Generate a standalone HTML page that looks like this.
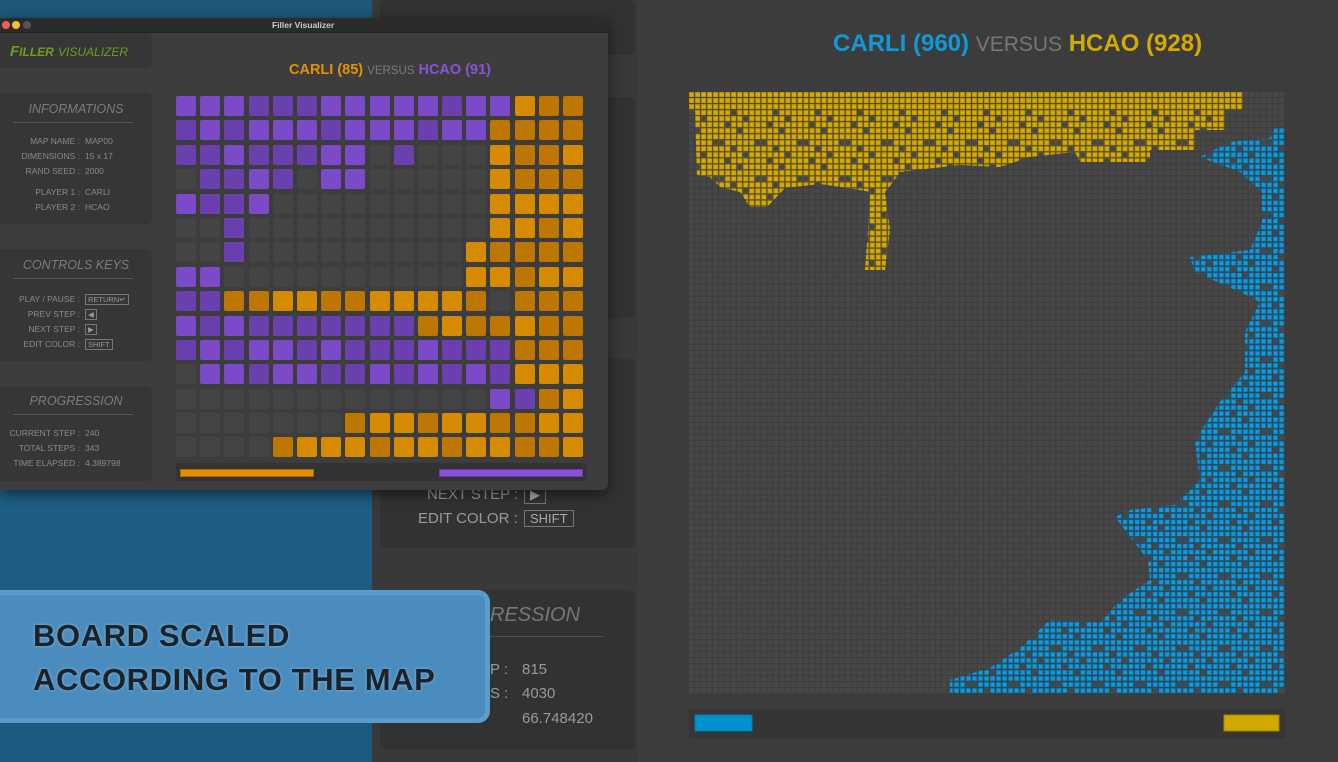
<!DOCTYPE html>
<html><head><meta charset="utf-8"><style>
*{margin:0;padding:0;box-sizing:border-box}
body{width:1338px;height:762px;overflow:hidden;background:#3c3c3c;font-family:"Liberation Sans",sans-serif;position:relative}
.a{position:absolute}
.desk{left:0;top:0;width:372px;height:762px;background:linear-gradient(180deg,#1d5878 0%,#1f5f86 50%,#1c5a80 100%)}
.backcol{left:372px;top:0;width:266px;height:762px;background:#393939}
.bp{background:#323232;border-radius:6px;left:380px;width:255px}
.bt{color:#9a9a9a;font-size:15px}
.key{border:1px solid #777;color:#aaa;font-size:13px;padding:0 5px}
.win{left:0;top:18px;width:608px;height:472px;background:#3d3d3d;border-radius:0 6px 6px 0;box-shadow:0 4px 14px rgba(0,0,0,.55);overflow:hidden}
.tb{left:0;top:0;width:608px;height:15px;background:#2b2b2b;border-bottom:1px solid #222}
.lp{background:#363636;border-radius:0 5px 5px 0;left:0;width:152px}
.ph{color:#7c7c7c;font-style:italic;font-size:12.5px;text-align:center;width:152px;left:0}
.ln{left:13px;width:120px;height:1px;background:#555}
.r{font-size:8.5px;color:#8a8a8a;line-height:15px;white-space:nowrap}
.r b{font-weight:normal;display:inline-block;width:80px;text-align:right;margin-right:5px}
.k{border:1px solid #777;font-size:7.5px;padding:0 2px;color:#999}
.grid{left:176px;top:78px;width:420px;display:grid;grid-template-columns:repeat(17,20px);column-gap:4.2px;row-gap:4.4px}
.grid i{display:block;width:20px;height:20px;border-radius:2px;background:#444}
.grid i.p{background:#7b4ac9}.grid i.q{background:#6a3fae}
.grid i.o{background:#d68a00}.grid i.n{background:#bd7700}
.banner{left:0;top:590px;width:490px;height:133px;background:#4a8cbd;border:5px solid #5a9cca;border-left:none;border-radius:0 12px 12px 0}
.bn{left:33px;font-weight:bold;font-size:31px;color:#1e2226;letter-spacing:0.6px;text-shadow:0 0 3px #6aaad6,0 0 3px #6aaad6}
</style></head><body>
<div class="a desk"></div>
<div class="a backcol"></div>
<div class="a bp" style="top:0;height:55px"></div>
<div class="a bp" style="top:97px;height:221px"></div>
<div class="a bp" style="top:358px;height:190px"></div>
<div class="a bp" style="top:590px;height:160px"></div>
<div class="a bt" style="left:427px;top:486px">NEXT STEP :</div><div class="a key" style="left:524px;top:486px">▶</div>
<div class="a bt" style="left:418px;top:510px">EDIT COLOR :</div><div class="a key" style="left:524px;top:510px">SHIFT</div>
<div class="a" style="left:490px;top:604px;font-size:20px;font-style:italic;color:#777">RESSION</div>
<div class="a" style="left:420px;top:636px;width:184px;height:1px;background:#505050"></div>
<div class="a bt" style="left:480px;top:661px">EP :</div><div class="a bt" style="left:522px;top:661px">815</div>
<div class="a bt" style="left:480px;top:685px">PS :</div><div class="a bt" style="left:522px;top:685px">4030</div>
<div class="a bt" style="left:440px;top:710px">ED :</div><div class="a bt" style="left:522px;top:710px">66.748420</div>

<div class="a" style="left:833px;top:30px;font-size:24px;font-weight:bold;color:#0e9ad8;white-space:nowrap">CARLI (960) <span style="font-weight:normal;color:#777;font-size:21px">VERSUS</span> <span style="color:#d4aa00">HCAO (928)</span></div>

<svg class="a" style="left:0;top:0" width="1338" height="762">
<defs>
<pattern id="g" width="6.02" height="6.02" patternUnits="userSpaceOnUse" x="689" y="92"><rect width="5" height="5" fill="#474747"/></pattern>
<pattern id="y" width="6.02" height="6.02" patternUnits="userSpaceOnUse" x="689" y="92"><rect width="5.2" height="5.2" fill="#a88400"/><rect x="0.6" y="0.6" width="4" height="4" fill="#d6ab00"/></pattern>
<pattern id="b" width="6.02" height="6.02" patternUnits="userSpaceOnUse" x="689" y="92"><rect width="5.2" height="5.2" fill="#06679a"/><rect x="0.6" y="0.6" width="4" height="4" fill="#1398d8"/></pattern>
<pattern id="h" width="42.14" height="36.12" patternUnits="userSpaceOnUse" x="689" y="92"><g fill="#474747"><rect x="6.02" y="0" width="5" height="5"/><rect x="24.08" y="12.04" width="5" height="5"/><rect x="30.1" y="12.04" width="5" height="5"/><rect x="12.04" y="24.08" width="5" height="5"/><rect x="36.12" y="30.1" width="5" height="5"/><rect x="0" y="18.06" width="5" height="5"/></g></pattern>
</defs>
<rect x="689" y="92" width="596" height="602" fill="#3d3d3d"/>
<rect x="689" y="92" width="596" height="602" fill="url(#g)"/>
<polygon fill="url(#y)" points="689,92 1243,92 1243,110 1225,110 1225,130 1195,130 1195,150 1150,150 1150,162 1080,162 1075,152 1030,157 1000,167 960,165 900,172 890,186 885,192 890,230 885,270 865,270 868,230 870,192 860,190 820,184 785,188 767,207 750,207 740,192 720,187 710,177 697,175 695,112 689,112"/>
<polygon fill="url(#b)" points="1275,128 1285,128 1285,694 950,694 950,680 990,668 1020,648 1050,620 1100,623 1120,600 1150,580 1148,560 1115,517 1130,510 1175,505 1200,480 1195,440 1220,402 1245,372 1245,332 1260,302 1240,292 1195,272 1190,257 1250,250 1262,222 1262,192 1240,172 1200,157 1230,142 1270,138"/>
<rect x="689" y="110" width="596" height="584" fill="url(#h)"/>
<rect x="689" y="709" width="596" height="29" fill="#353535"/>
<rect x="695" y="715" width="57" height="16" fill="#0091cf" stroke="#0a78ad"/>
<rect x="1224" y="715" width="55" height="16" fill="#d0a800" stroke="#a88600"/>
</svg>

<div class="a win">
<div class="a tb"></div>
<div class="a" style="left:2px;top:3px;width:8px;height:8px;border-radius:50%;background:#ed5f57"></div>
<div class="a" style="left:12px;top:3px;width:8px;height:8px;border-radius:50%;background:#f5bf2f"></div>
<div class="a" style="left:23px;top:3px;width:8px;height:8px;border-radius:50%;background:#555"></div>
<div class="a" style="left:272px;top:2px;font-size:8.5px;color:#ccc;font-weight:bold">Filler Visualizer</div>
<div class="a lp" style="top:15px;height:35px"></div>
<div class="a" style="left:10px;top:25px;font-size:15px;font-style:italic;color:#6aa01c;white-space:nowrap"><b>F<span style="font-size:12px">ILLER</span></b> <span style="font-size:12px">VISUALIZER</span></div>
<div class="a lp" style="top:75px;height:131px"></div>
<div class="a ph" style="top:84px">INFORMATIONS</div><div class="a ln" style="top:104px"></div>
<div class="a r" style="left:0;top:116px"><b>MAP NAME :</b>MAP00<br><b>DIMENSIONS :</b>15 x 17<br><b>RAND SEED :</b>2000</div>
<div class="a r" style="left:0;top:167px"><b>PLAYER 1 :</b>CARLI<br><b>PLAYER 2 :</b>HCAO</div>
<div class="a lp" style="top:231px;height:112px"></div>
<div class="a ph" style="top:240px">CONTROLS KEYS</div><div class="a ln" style="top:260px"></div>
<div class="a r" style="left:0;top:274px"><b>PLAY / PAUSE :</b><span class="k">RETURN↵</span><br><b>PREV STEP :</b><span class="k">◀</span><br><b>NEXT STEP :</b><span class="k">▶</span><br><b>EDIT COLOR :</b><span class="k">SHIFT</span></div>
<div class="a lp" style="top:368px;height:95px"></div>
<div class="a ph" style="top:376px">PROGRESSION</div><div class="a ln" style="top:396px"></div>
<div class="a r" style="left:0;top:408px"><b>CURRENT STEP :</b>240<br><b>TOTAL STEPS :</b>343<br><b>TIME ELAPSED :</b>4.389798</div>
<div class="a" style="left:289px;top:44px;font-size:14.5px;font-weight:bold;color:#e49200;white-space:nowrap">CARLI (85) <span style="font-weight:normal;color:#7a7a7a;font-size:11.5px">VERSUS</span> <span style="color:#8a52d6">HCAO (91)</span></div>
<div class="a grid">
<i class="p"></i><i class="p"></i><i class="p"></i><i class="q"></i><i class="q"></i><i class="q"></i><i class="p"></i><i class="p"></i><i class="p"></i><i class="p"></i><i class="p"></i><i class="q"></i><i class="p"></i><i class="p"></i><i class="o"></i><i class="n"></i><i class="n"></i>
<i class="q"></i><i class="p"></i><i class="q"></i><i class="p"></i><i class="p"></i><i class="p"></i><i class="q"></i><i class="p"></i><i class="p"></i><i class="p"></i><i class="q"></i><i class="p"></i><i class="p"></i><i class="n"></i><i class="n"></i><i class="n"></i><i class="n"></i>
<i class="q"></i><i class="q"></i><i class="p"></i><i class="q"></i><i class="q"></i><i class="q"></i><i class="p"></i><i class="p"></i><i></i><i class="q"></i><i></i><i></i><i></i><i class="o"></i><i class="n"></i><i class="n"></i><i class="o"></i>
<i></i><i class="q"></i><i class="q"></i><i class="p"></i><i class="q"></i><i></i><i class="p"></i><i class="p"></i><i></i><i></i><i></i><i></i><i></i><i class="o"></i><i class="n"></i><i class="n"></i><i class="n"></i>
<i class="p"></i><i class="q"></i><i class="q"></i><i class="p"></i><i></i><i></i><i></i><i></i><i></i><i></i><i></i><i></i><i></i><i class="o"></i><i class="o"></i><i class="o"></i><i class="o"></i>
<i></i><i></i><i class="q"></i><i></i><i></i><i></i><i></i><i></i><i></i><i></i><i></i><i></i><i></i><i class="o"></i><i class="o"></i><i class="n"></i><i class="o"></i>
<i></i><i></i><i class="q"></i><i></i><i></i><i></i><i></i><i></i><i></i><i></i><i></i><i></i><i class="o"></i><i class="n"></i><i class="n"></i><i class="n"></i><i class="n"></i>
<i class="p"></i><i class="p"></i><i></i><i></i><i></i><i></i><i></i><i></i><i></i><i></i><i></i><i></i><i class="o"></i><i class="o"></i><i class="n"></i><i class="o"></i><i class="o"></i>
<i class="q"></i><i class="q"></i><i class="n"></i><i class="n"></i><i class="o"></i><i class="o"></i><i class="n"></i><i class="n"></i><i class="o"></i><i class="o"></i><i class="o"></i><i class="o"></i><i class="n"></i><i></i><i class="n"></i><i class="n"></i><i class="n"></i>
<i class="p"></i><i class="q"></i><i class="p"></i><i class="q"></i><i class="q"></i><i class="q"></i><i class="q"></i><i class="q"></i><i class="q"></i><i class="q"></i><i class="n"></i><i class="o"></i><i class="n"></i><i class="n"></i><i class="o"></i><i class="n"></i><i class="n"></i>
<i class="q"></i><i class="p"></i><i class="q"></i><i class="p"></i><i class="p"></i><i class="q"></i><i class="p"></i><i class="q"></i><i class="q"></i><i class="q"></i><i class="p"></i><i class="q"></i><i class="q"></i><i class="q"></i><i class="n"></i><i class="n"></i><i class="n"></i>
<i></i><i class="p"></i><i class="p"></i><i class="q"></i><i class="p"></i><i class="p"></i><i class="q"></i><i class="q"></i><i class="p"></i><i class="q"></i><i class="p"></i><i class="q"></i><i class="p"></i><i class="q"></i><i class="o"></i><i class="o"></i><i class="o"></i>
<i></i><i></i><i></i><i></i><i></i><i></i><i></i><i></i><i></i><i></i><i></i><i></i><i></i><i class="p"></i><i class="q"></i><i class="n"></i><i class="o"></i>
<i></i><i></i><i></i><i></i><i></i><i></i><i></i><i class="n"></i><i class="o"></i><i class="o"></i><i class="n"></i><i class="o"></i><i class="o"></i><i class="n"></i><i class="n"></i><i class="o"></i><i class="o"></i>
<i></i><i></i><i></i><i></i><i class="n"></i><i class="o"></i><i class="o"></i><i class="o"></i><i class="n"></i><i class="o"></i><i class="o"></i><i class="n"></i><i class="o"></i><i class="o"></i><i class="n"></i><i class="n"></i><i class="o"></i>
</div>
<div class="a" style="left:176px;top:445px;width:411px;height:18px;background:#333"></div>
<div class="a" style="left:180px;top:451px;width:134px;height:8px;background:#e08f00;border:1px solid #a86a00"></div>
<div class="a" style="left:439px;top:451px;width:144px;height:8px;background:#8a52d6;border:1px solid #6a3aa8"></div>
</div>

<div class="a banner"></div>
<div class="a bn" style="top:618px">BOARD SCALED</div>
<div class="a bn" style="top:662px">ACCORDING TO THE MAP</div>
</body></html>
